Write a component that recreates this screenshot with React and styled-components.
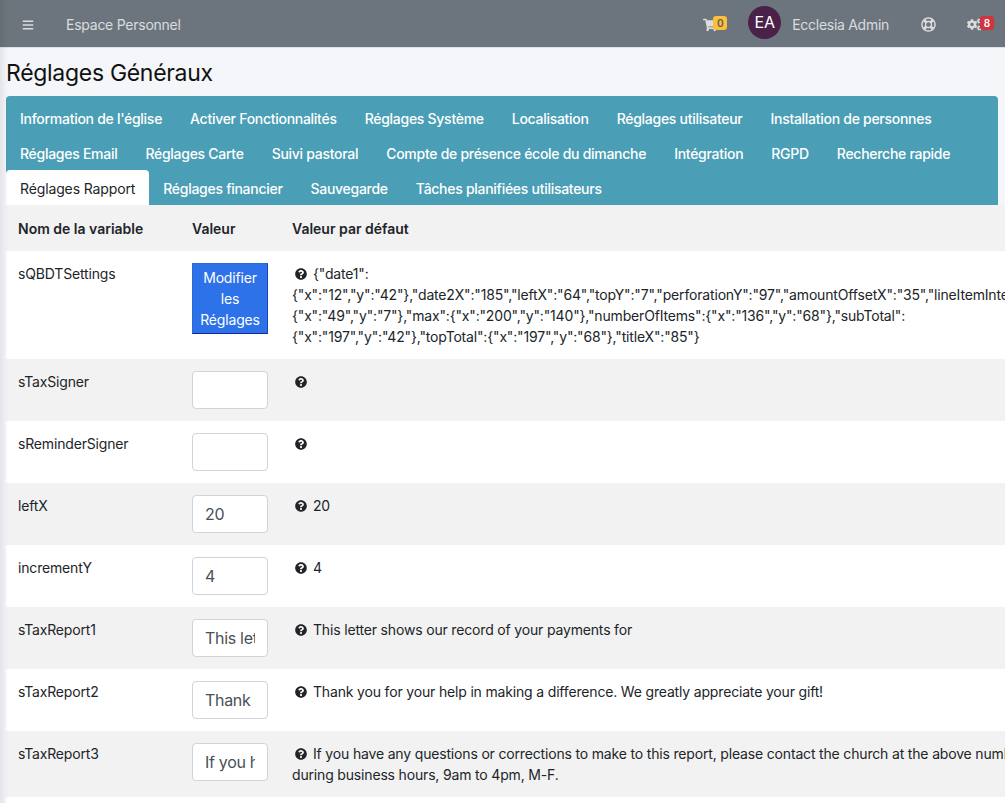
import React from 'react';
import styled, { createGlobalStyle } from 'styled-components';
import { FaBars, FaShoppingCart, FaRegLifeRing, FaCogs, FaQuestionCircle } from 'react-icons/fa';

const GlobalStyle = createGlobalStyle`
  html, body {
    margin: 0;
    height: 100%;
    overflow: hidden;
    background: #f4f6f9;
  }
  body {
    font-family: Inter, "Noto Sans", sans-serif;
    font-size: 14px;
    line-height: 21px;
    letter-spacing: -0.17px;
    color: #212529;
  }
`;

const Page = styled.div`
  position: relative;
  width: 1005px;
  height: 803px;
  overflow: hidden;

  &::after {
    content: '';
    position: absolute;
    top: 0;
    bottom: 0;
    left: 0;
    width: 8px;
    background: linear-gradient(to right, rgba(0, 0, 0, 0.07), rgba(0, 0, 0, 0));
  }
`;

const Navbar = styled.header`
  height: 48px;
  box-sizing: border-box;
  padding-top: 2px;
  display: flex;
  align-items: center;
  background: #6c757d;
  border-bottom: 1px solid #dee2e6;
  color: rgba(255, 255, 255, 0.75);
`;

const MenuButton = styled.span`
  display: flex;
  margin-left: 22px;
  font-size: 12px;
`;

const NavTitle = styled.span`
  margin-left: 32px;
  font-size: 14px;
  letter-spacing: -0.25px;
  flex: 1;
`;

const NavIcon = styled.span`
  position: relative;
  display: flex;
  font-size: ${(p) => p.$size || 14}px;
  margin-left: ${(p) => p.$left || 0}px;
  margin-right: ${(p) => p.$right || 0}px;
`;

const Badge = styled.span`
  position: absolute;
  top: ${(p) => p.$top}px;
  left: ${(p) => p.$x}px;
  width: 14px;
  height: 14px;
  line-height: 14px;
  border-radius: 3px;
  font-size: 10px;
  font-weight: 600;
  letter-spacing: 0;
  text-align: center;
  background: ${(p) => p.$bg};
  color: ${(p) => p.$color};
`;

const Avatar = styled.span`
  width: 33px;
  height: 33px;
  margin: -5px 0 0 31px;
  border-radius: 50%;
  background: #4a2148;
  color: #fff;
  font-size: 16px;
  display: flex;
  align-items: center;
  justify-content: center;
`;

const UserName = styled.span`
  margin-left: 11px;
  font-size: 14px;
  letter-spacing: -0.28px;
`;

const Content = styled.main`
  padding: 0 7px 0 6px;
`;

const Title = styled.h1`
  margin: 0;
  height: 48px;
  font-size: 23px;
  font-weight: 400;
  line-height: 50px;
  letter-spacing: -0.3px;
  color: #111;
`;

const Card = styled.section`
  border-radius: 4px 4px 0 0;
`;

const Tabs = styled.nav`
  background: #4a9eb5;
  border-radius: 4px 4px 0 0;
  padding-top: 4px;
  display: flex;
  flex-wrap: wrap;
`;

const Tab = styled.span`
  height: 35px;
  line-height: 37px;
  padding: 0 14px;
  font-size: 14px;
  white-space: nowrap;
  border-radius: 4px 4px 0 0;
  color: ${(p) => (p.$active ? '#212529' : '#fff')};
  background: ${(p) => (p.$active ? '#fff' : 'transparent')};
  font-weight: ${(p) => (p.$active ? 400 : 500)};
  letter-spacing: ${(p) => (p.$active ? '-0.13px' : '-0.28px')};
`;

const Table = styled.table`
  border-collapse: collapse;
  table-layout: fixed;
  width: 1073px;
  background: #fff;
`;

const Row = styled.tr`
  background: ${(p) => (p.$striped ? '#f2f2f2' : '#fff')};
`;

const Head = styled.th`
  height: 46px;
  box-sizing: border-box;
  padding: 0 12px;
  text-align: left;
  font-weight: 600;
  letter-spacing: 0;
  white-space: nowrap;
  width: ${(p) => p.$width || 'auto'};
`;

const Cell = styled.td`
  padding: 12px;
  vertical-align: top;
`;

const HelpIcon = styled(FaQuestionCircle)`
  font-size: 12px;
  color: #212529;
  margin: 0 6px 0 3px;
  vertical-align: -1px;
`;

const SettingsButton = styled.button`
  display: block;
  width: 76px;
  box-sizing: border-box;
  padding: 3px 0;
  font: inherit;
  letter-spacing: inherit;
  line-height: 21px;
  background: #2d72e8;
  color: #fff;
  border: 1px solid #2a6ad8;
  border-bottom: 1px solid #12279a;
  border-right: 1px solid #1c46b8;
`;

const TextInput = styled.input`
  display: block;
  width: 76px;
  height: 38px;
  box-sizing: border-box;
  padding: 6px 12px;
  font-family: inherit;
  font-size: 16px;
  letter-spacing: -0.3px;
  color: #495057;
  background: #fff;
  border: 1px solid #ced4da;
  border-radius: 4px;
`;

const tabs = [
  "Information de l'église",
  'Activer Fonctionnalités',
  'Réglages Système',
  'Localisation',
  'Réglages utilisateur',
  'Installation de personnes',
  'Réglages Email',
  'Réglages Carte',
  'Suivi pastoral',
  'Compte de présence école du dimanche',
  'Intégration',
  'RGPD',
  'Recherche rapide',
  'Réglages Rapport',
  'Réglages financier',
  'Sauvegarde',
  'Tâches planifiées utilisateurs',
];

const qbdt =
  '{"date1":{"x":"12","y":"42"},"date2X":"185","leftX":"64","topY":"7","perforationY":"97","amountOffsetX":"35","lineItemInterval":{"x":"49","y":"7"},"max":{"x":"200","y":"140"},"numberOfItems":{"x":"136","y":"68"},"subTotal":{"x":"197","y":"42"},"topTotal":{"x":"197","y":"68"},"titleX":"85"}';

const rows = [
  { name: 'sTaxSigner', value: '', help: '' },
  { name: 'sReminderSigner', value: '', help: '' },
  { name: 'leftX', value: '20', help: '20' },
  { name: 'incrementY', value: '4', help: '4' },
  {
    name: 'sTaxReport1',
    value: 'This letter shows our record of your payments for',
    help: 'This letter shows our record of your payments for',
  },
  {
    name: 'sTaxReport2',
    value: 'Thank you for your help in making a difference. We greatly appreciate your gift!',
    help: 'Thank you for your help in making a difference. We greatly appreciate your gift!',
  },
  {
    name: 'sTaxReport3',
    value: 'If you have any questions or corrections to make to this report',
    help: 'If you have any questions or corrections to make to this report, please contact the church at the above number during business hours, 9am to 4pm, M-F.',
  },
];

const App = () => {
  return (
    <Page>
      <GlobalStyle />
      <Navbar>
        <MenuButton><FaBars /></MenuButton>
        <NavTitle>Espace Personnel</NavTitle>
        <NavIcon $size={14}>
          <FaShoppingCart />
          <Badge $top={-2} $x={10} $bg="#fbbf3c" $color="#5c5c5c">0</Badge>
        </NavIcon>
        <Avatar>EA</Avatar>
        <UserName>Ecclesia Admin</UserName>
        <NavIcon $left={32} $size={15}><FaRegLifeRing /></NavIcon>
        <NavIcon $left={31} $right={23} $size={15}>
          <FaCogs />
          <Badge $top={-1} $x={13} $bg="#d0343f" $color="#fff">8</Badge>
        </NavIcon>
      </Navbar>
      <Content>
        <Title>Réglages Généraux</Title>
        <Card>
          <Tabs>
            {tabs.map((t) => (
              <Tab key={t} $active={t === 'Réglages Rapport'}>{t}</Tab>
            ))}
          </Tabs>
          <Table>
            <thead>
              <Row $striped>
                <Head $width="174px">Nom de la variable</Head>
                <Head $width="100px">Valeur</Head>
                <Head>Valeur par défaut</Head>
              </Row>
            </thead>
            <tbody>
              <Row>
                <Cell>sQBDTSettings</Cell>
                <Cell><SettingsButton>Modifier les Réglages</SettingsButton></Cell>
                <Cell><HelpIcon />{qbdt}</Cell>
              </Row>
              {rows.map((r, i) => (
                <Row key={r.name} $striped={i % 2 === 0}>
                  <Cell>{r.name}</Cell>
                  <Cell><TextInput defaultValue={r.value} /></Cell>
                  <Cell><HelpIcon />{r.help}</Cell>
                </Row>
              ))}
              <Row>
                <Cell colSpan={3} />
              </Row>
            </tbody>
          </Table>
        </Card>
      </Content>
    </Page>
  );
};

export default App;
